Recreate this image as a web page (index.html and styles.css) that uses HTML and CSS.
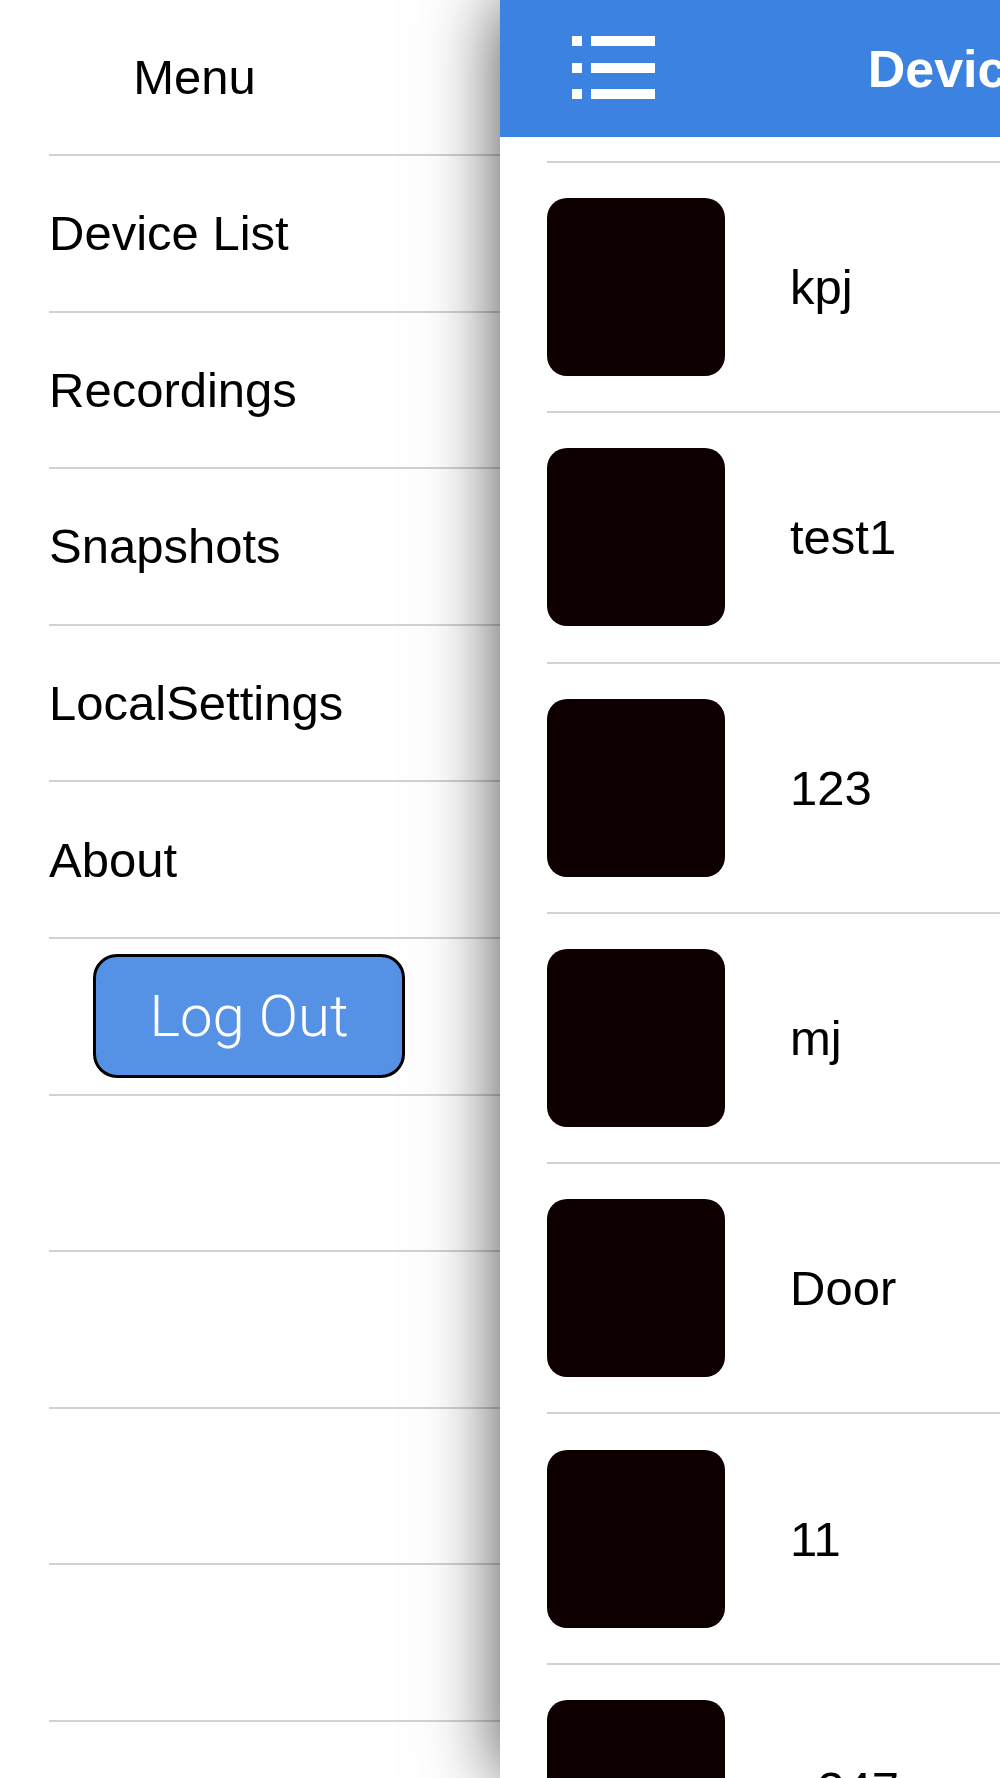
FILE: index.html
```html
<!DOCTYPE html>
<html lang="en">
<head>
    <meta charset="UTF-8">
    <meta name="viewport" content="width=device-width, initial-scale=1.0">
    <title>Device List</title>
    <link rel="stylesheet" href="styles.css">
</head>
<body>
    <div class="app">
        <aside class="side-menu">
            <div class="menu-title">Menu</div>
            <ul class="menu-list">
                <li class="menu-item">Device List</li>
                <li class="menu-item">Recordings</li>
                <li class="menu-item">Snapshots</li>
                <li class="menu-item">LocalSettings</li>
                <li class="menu-item">About</li>
                <li class="menu-item logout-row">
                    <button type="button" class="logout-btn">Log Out</button>
                </li>
                <li class="menu-item"></li>
                <li class="menu-item"></li>
                <li class="menu-item"></li>
                <li class="menu-item"></li>
                <li class="menu-item"></li>
            </ul>
        </aside>

        <main class="main-panel">
            <header class="nav-bar">
                <span class="menu-icon">
                    <svg width="84" height="64" viewBox="0 0 84 64">
                        <rect x="0" y="0" width="10" height="10" fill="#fff"/>
                        <rect x="19" y="0" width="64" height="10" fill="#fff"/>
                        <rect x="0" y="27" width="10" height="10" fill="#fff"/>
                        <rect x="19" y="27" width="64" height="10" fill="#fff"/>
                        <rect x="0" y="53" width="10" height="10" fill="#fff"/>
                        <rect x="19" y="53" width="64" height="10" fill="#fff"/>
                    </svg>
                </span>
                <h1 class="nav-title">Device List</h1>
            </header>

            <ul class="device-list">
                <li class="device-row"><span class="thumb"></span><span class="device-name">kpj</span></li>
                <li class="device-row"><span class="thumb"></span><span class="device-name">test1</span></li>
                <li class="device-row"><span class="thumb"></span><span class="device-name">123</span></li>
                <li class="device-row"><span class="thumb"></span><span class="device-name">mj</span></li>
                <li class="device-row"><span class="thumb"></span><span class="device-name">Door</span></li>
                <li class="device-row"><span class="thumb"></span><span class="device-name">11</span></li>
                <li class="device-row"><span class="thumb"></span><span class="device-name">a247</span></li>
            </ul>
        </main>
    </div>
</body>
</html>
```

FILE: styles.css
```css
html, body {
    margin: 0;
    padding: 0;
    background-color: #fff;
}

body {
    width: 1000px;
    height: 1778px;
    overflow: hidden;
    font-family: 'Liberation Sans', Arial, sans-serif;
    color: #000;
}

.app {
    display: flex;
    width: 1000px;
    height: 1778px;
    overflow: hidden;
}

/* left drawer */
.side-menu {
    flex: 0 0 500px;
    background-color: #fff;
}

.menu-title {
    width: 389px;
    height: 154px;
    line-height: 154px;
    text-align: center;
    font-size: 49px;
}

.menu-list {
    list-style: none;
    margin: 0 0 0 49px;
    padding: 0;
}

.menu-item {
    box-sizing: border-box;
    height: 156.6px;
    border-top: 2px solid #d2d2d2;
    display: flex;
    align-items: center;
    font-size: 49px;
}

.logout-row {
    padding-left: 44px;
}

.logout-btn {
    width: 312px;
    height: 124px;
    background-color: #5592e6;
    border: 3px solid #000;
    border-radius: 24px;
    color: #fff;
    font-family: Roboto, 'Liberation Sans', sans-serif;
    font-weight: 300;
    font-size: 58px;
    padding: 0;
    cursor: pointer;
}

/* main panel sliding over the menu */
.main-panel {
    flex: 0 0 1000px;
    position: relative;
    z-index: 1;
    background-color: #fff;
    box-shadow: 0 0 70px rgba(0, 0, 0, 0.7);
}

.nav-bar {
    height: 137px;
    background-color: #3c83e1;
    display: flex;
    align-items: center;
    position: relative;
}

.menu-icon {
    display: flex;
    margin-left: 72px;
    margin-top: -2px;
}

.nav-title {
    position: absolute;
    left: 0;
    right: 0;
    margin: 0;
    text-align: center;
    color: #fff;
    font-size: 52px;
    font-weight: bold;
    padding-left: 10px;
}

.device-list {
    list-style: none;
    margin: 24px 0 0 47px;
    padding: 0;
}

.device-row {
    box-sizing: border-box;
    height: 250.3px;
    border-top: 2px solid #d2d2d2;
    display: flex;
    align-items: center;
}

.thumb {
    width: 178px;
    height: 178px;
    border-radius: 20px;
    background-color: #0e0000;
    flex-shrink: 0;
}

.device-name {
    margin-left: 65px;
    font-size: 49px;
}
```
